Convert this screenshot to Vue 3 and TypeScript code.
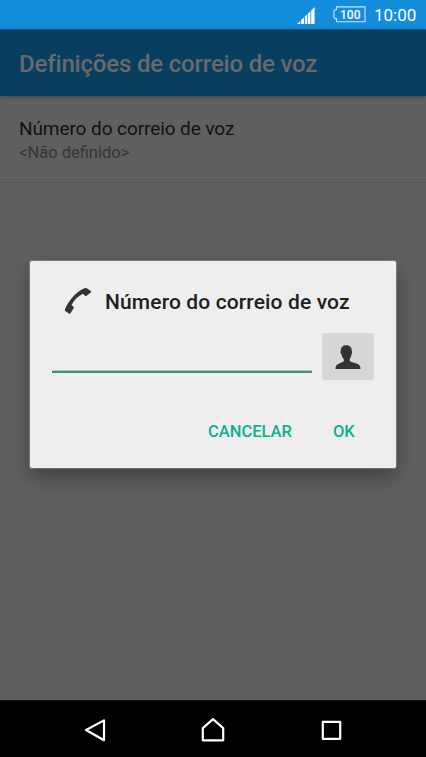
<script setup lang="ts">
import { ref } from 'vue'

const voicemailNumber = ref<string>('')
const battery: number = 100
const clock: string = '10:00'
</script>

<template>
  <div class="phone">
    <header class="status">
      <svg class="signal" width="18" height="17" viewBox="0 0 18 17">
        <path d="M0 17L3.2 14V17ZM4.2 17V13L7 10.4V17ZM7.9 17V9.5L10.3 7.2V17ZM11 17V6.6L13.4 4.2V17ZM14.2 17V3.5L17.6 0V17Z" fill="#fff" />
      </svg>
      <div class="battery">
        <svg width="33" height="17" viewBox="0 0 33 17">
          <path d="M3.5 .9H32V15.7H3.5V12.6H2L.9 11.2V5.2L2 3.8H3.5Z" fill="none" stroke="#c8e4f8" stroke-width="1.1" />
        </svg>
        <span class="level">{{ battery }}</span>
      </div>
      <span class="clock">{{ clock }}</span>
    </header>

    <main class="screen">
      <div class="toolbar">
        <h1>Definições de correio de voz</h1>
      </div>
      <div class="setting">
        <div class="setting-title">Número do correio de voz</div>
        <div class="setting-value">&lt;Não definido&gt;</div>
      </div>

      <section class="dialog" role="dialog">
        <div class="dialog-head">
          <svg width="28" height="28" viewBox="0 0 28 28">
            <path d="M.8 23.3C1.3 20.8 3.1 17.5 5.8 13.8C9.8 8 15.4 3.2 20.3 1.2Q22.1.5 23.2 1.4L26.8 4Q27.6 4.7 26.8 5.4L22.5 8.8Q21.8 9.3 21.1 8.7L18.8 6.7C13.8 9.2 9.8 13.2 7.5 18.1L9.5 19.7Q10.2 20.3 9.7 21L6.5 26.3Q5.9 27.3 5 26.6L1.3 24.1Q.7 23.8.8 23.3Z" fill="#333" />
          </svg>
          <h2>Número do correio de voz</h2>
        </div>
        <div class="entry">
          <input v-model="voicemailNumber" type="tel" />
          <button class="contact" type="button">
            <svg width="26" height="25" viewBox="0 0 26 25">
              <path d="M.5 24C.4 21.3 1.2 19.8 3.6 18.7L8.1 16.8Q9.4 16 8.8 13.9C7.2 12.2 6.7 10.6 6.4 9C5.3 8.5 5.2 6.8 5.8 6.1C5.6 2.2 8 .2 11 .2C14.5.1 17 2 16.8 6C17.5 6.8 17.2 8.5 16.6 9C16.4 10.8 15.9 12.3 14.7 13.9Q14.3 15.9 15.8 16.8L21.5 18.6C24.5 19.5 25.5 21 25.5 24Z" fill="#333" />
            </svg>
          </button>
        </div>
        <div class="actions">
          <button class="cancel" type="button">CANCELAR</button>
          <button class="ok" type="button">OK</button>
        </div>
      </section>
    </main>

    <nav class="navbar">
      <svg width="36" height="36" viewBox="0 0 36 36"><path d="M9 18L27 8.4V28.3Z" /></svg>
      <svg width="36" height="36" viewBox="0 0 36 36"><path d="M7.8 16.1L18 7.2L28.2 16.1V28.3H7.8Z" /></svg>
      <svg width="36" height="36" viewBox="0 0 36 36"><path d="M9.8 9.8H27.2V26.8H9.8Z" /></svg>
    </nav>
  </div>
</template>

<style>
body {
  background: #000;
  overflow: hidden;
}
</style>

<style scoped>
.phone {
  width: 426px;
  height: 757px;
  display: flex;
  flex-direction: column;
  overflow: hidden;
  font-family: Roboto, "Liberation Sans", sans-serif;
  background: #000;
}
.status {
  height: 29px;
  box-sizing: border-box;
  flex: none;
  display: flex;
  align-items: flex-start;
  padding: 7px 0 0 297px;
  background: #148edb;
  color: #fff;
}
.signal {
  flex: none;
}
.battery {
  position: relative;
  flex: none;
  width: 33px;
  height: 17px;
  margin: -1px 0 0 18px;
}
.battery svg {
  display: block;
}
.level {
  position: absolute;
  left: 7px;
  top: 2px;
  font-size: 12px;
  font-weight: 500;
  line-height: 14px;
}
.clock {
  margin: -3px 0 0 8px;
  font-size: 17px;
  line-height: 22px;
}
.screen {
  position: relative;
  height: 671px;
  flex: none;
  background: #5f5f5f;
}
.toolbar {
  height: 67px;
  box-sizing: border-box;
  padding: 19px 0 0 19px;
  border-top: 1px solid #0c5684;
  background: #083f5f;
  box-shadow: 0 1px 4px rgba(0, 0, 0, 0.35);
}
h1 {
  margin: 0;
  font-size: 24px;
  font-weight: 500;
  line-height: 30px;
  letter-spacing: -0.18px;
  color: #696969;
  white-space: nowrap;
}
.setting {
  height: 87px;
  box-sizing: border-box;
  padding: 21px 0 0 19px;
  border-bottom: 1px solid #565656;
}
.setting-title {
  font-size: 19px;
  line-height: 24px;
  letter-spacing: -0.08px;
  color: #111;
}
.setting-value {
  font-size: 16.5px;
  line-height: 24px;
  color: #363636;
}
.dialog {
  position: absolute;
  left: 30px;
  top: 232px;
  width: 366px;
  height: 207px;
  border-radius: 2px;
  background: #eee;
  box-shadow: 0 0 0 1px rgba(150, 150, 150, 0.55), 0 9px 20px rgba(0, 0, 0, 0.33);
}
.dialog-head {
  display: flex;
  align-items: flex-start;
  gap: 13px;
  height: 28px;
  padding: 26px 0 0 34px;
}
h2 {
  margin: 1px 0 0;
  font-size: 21px;
  font-weight: 500;
  line-height: 28px;
  letter-spacing: 0.13px;
  color: #212121;
  white-space: nowrap;
}
.entry {
  display: flex;
  gap: 10px;
  padding: 18px 0 0 22px;
}
input {
  width: 260px;
  height: 40px;
  box-sizing: border-box;
  padding: 0;
  border: 0;
  border-bottom: 2px solid #349380;
  background: transparent;
  box-shadow: inset 0 -1px #a9c9c2;
  font: 20px Roboto, sans-serif;
  outline: 0;
}
button {
  border: 0;
  padding: 0;
  background: none;
  font: 500 16.5px/20px Roboto, sans-serif;
  color: #0ab18e;
}
.contact {
  display: flex;
  align-items: flex-start;
  justify-content: center;
  width: 52px;
  height: 47px;
  padding-top: 12px;
  border-radius: 2px;
  background: #d7d7d7;
}
.actions {
  display: flex;
  gap: 41px;
  padding: 42px 0 0 178px;
}
.navbar {
  height: 57px;
  flex: none;
  box-sizing: border-box;
  display: flex;
  justify-content: space-between;
  align-items: flex-start;
  padding: 11px 77px 0;
  border-top: 1px solid #161616;
}
.navbar path {
  fill: none;
  stroke: #fff;
  stroke-width: 2.2;
  stroke-linejoin: round;
}
</style>
